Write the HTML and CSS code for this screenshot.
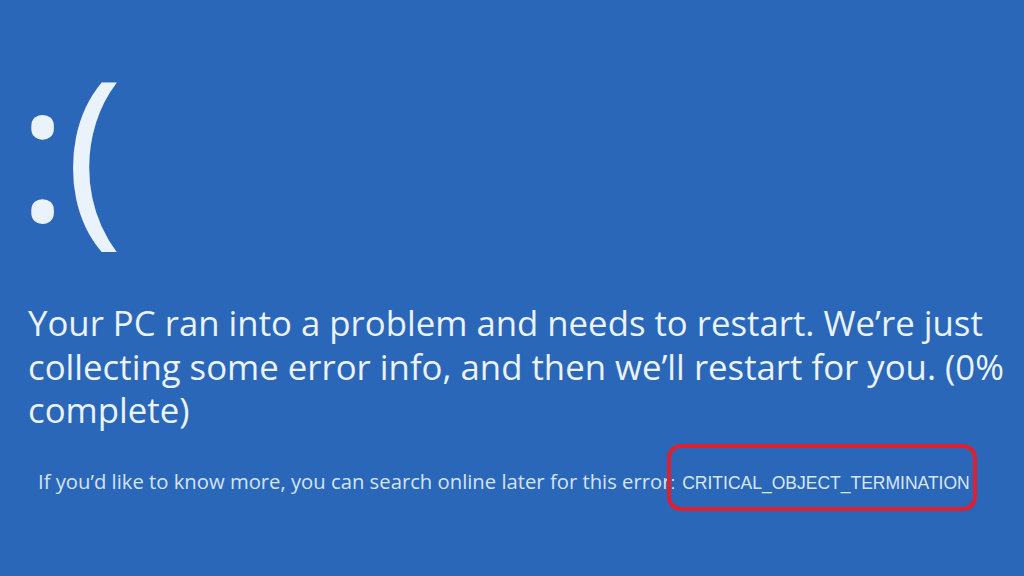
FILE: index.html
```html
<!DOCTYPE html>
<html lang="en">
<head>
<meta charset="utf-8">
<title>Stop code</title>
<link rel="stylesheet" href="styles.css">
</head>
<body>
<main class="screen">
  <div class="face">:(</div>
  <p class="message">Your PC ran into a problem and needs to restart. We’re just collecting some error info, and then we’ll restart for you. (0% complete)</p>
  <p class="info">If you’d like to know more, you can search online later for this erro<span class="mark">r<span class="code">: CRITICAL_OBJECT_TERMINATION</span></span></p>
</main>
</body>
</html>
```
FILE: styles.css
```css
html, body {
  margin: 0;
  padding: 0;
  height: 100%;
}
body {
  background: #2b67b9;
  overflow: hidden;
}
.screen {
  display: flex;
  flex-direction: column;
  padding: 41px 0 0 28px;
  color: #eaf2fc;
  font-family: "Open Sans", "Noto Sans", sans-serif;
}
.face {
  margin-left: -11px;
  font-size: 195px;
  line-height: 210px;
  height: 210px;
  font-weight: 400;
  letter-spacing: -3px;
}
.message {
  margin: 50px 0 0;
  width: 990px;
  font-size: 34.75px;
  line-height: 43.5px;
}
.info {
  margin: 36px 0 0 10px;
  font-size: 20.25px;
  line-height: 26px;
  color: #d4e3f6;
}
.mark {
  position: relative;
}
.code {
  font-family: "Liberation Sans", Arial, sans-serif;
  font-size: 17.5px;
  color: #d8e6f8;
  word-spacing: 2px;
}
.mark::after {
  content: "";
  position: absolute;
  box-sizing: border-box;
  left: 5px;
  top: -23px;
  width: 310px;
  height: 67px;
  border: 4px solid #e0202e;
  border-radius: 14px;
}
```
